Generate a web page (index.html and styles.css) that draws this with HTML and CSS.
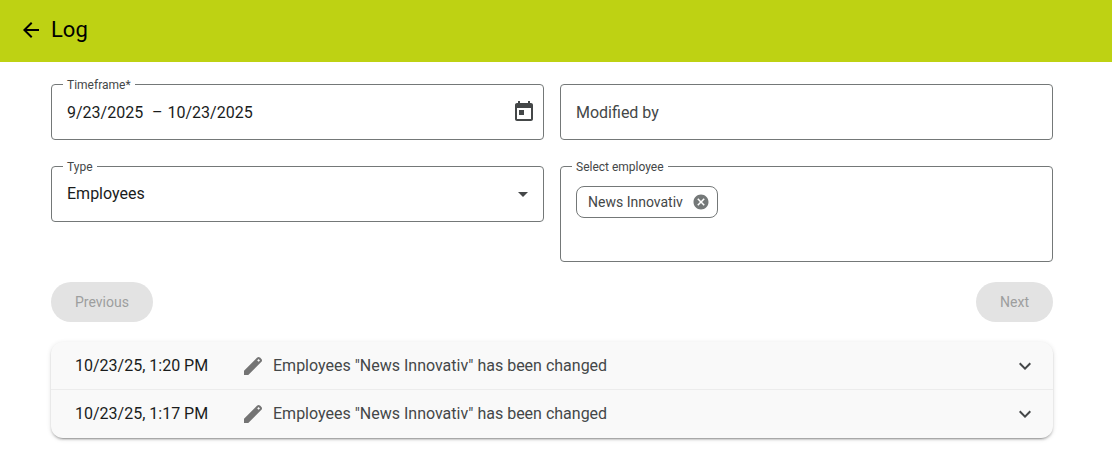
FILE: index.html
```html
<!DOCTYPE html>
<html lang="en">
<head>
  <meta charset="UTF-8">
  <meta name="viewport" content="width=device-width, initial-scale=1.0">
  <title>Log</title>
  <link rel="stylesheet" href="styles.css">
</head>
<body>
  <header class="toolbar">
    <a class="back" href="#" aria-label="Back">
      <svg viewBox="0 0 24 24" width="24" height="24"><path d="M20 11H7.83l5.59-5.59L12 4l-8 8 8 8 1.41-1.41L7.83 13H20v-2z"/></svg>
    </a>
    <h1>Log</h1>
  </header>

  <main>
    <form class="filters">
      <div class="field">
        <label for="startDate">Timeframe*</label>
        <div class="date-range">
          <input type="text" id="startDate" value="9/23/2025">
          <span>–</span>
          <input type="text" id="endDate" value="10/23/2025" aria-label="End date">
        </div>
        <button type="button" class="icon-button" aria-label="Open calendar">
          <svg viewBox="0 0 24 24" width="24" height="24"><path d="M19 3h-1V1h-2v2H8V1H6v2H5c-1.11 0-1.99.9-1.99 2L3 19c0 1.1.89 2 2 2h14c1.1 0 2-.9 2-2V5c0-1.1-.9-2-2-2zm0 16H5V8h14v11zM7 10h5v5H7z"/></svg>
        </button>
      </div>

      <div class="field">
        <input type="text" class="text-input" placeholder="Modified by" aria-label="Modified by">
      </div>

      <div class="field field-select">
        <label for="type">Type</label>
        <select id="type">
          <option>Employees</option>
        </select>
        <svg class="arrow" viewBox="0 0 10 5" width="10" height="5"><path d="M0 0l5 5 5-5z"/></svg>
      </div>

      <div class="field field-chips">
        <label for="employee">Select employee</label>
        <div class="chip">
          <span>News Innovativ</span>
          <button type="button" class="icon-button" aria-label="Remove News Innovativ">
            <svg viewBox="0 0 24 24" width="18" height="18"><path d="M12 2C6.47 2 2 6.47 2 12s4.47 10 10 10 10-4.47 10-10S17.53 2 12 2zm5 13.59L15.59 17 12 13.41 8.41 17 7 15.59 10.59 12 7 8.41 8.41 7 12 10.59 15.59 7 17 8.41 13.41 12 17 15.59z"/></svg>
          </button>
        </div>
        <input type="text" id="employee" class="text-input">
      </div>
    </form>

    <nav class="pager">
      <button type="button" disabled>Previous</button>
      <button type="button" disabled>Next</button>
    </nav>

    <div class="log">
      <button type="button" class="log-entry">
        <span class="time">10/23/25, 1:20 PM</span>
        <svg class="pencil" viewBox="0 0 24 24" width="24" height="24"><path d="M3 21v-4.25L16.2 3.575q.3-.275.663-.425t.762-.15.775.15.65.45L20.425 5q.3.275.437.65T21 6.4q0 .4-.138.763t-.437.662L7.25 21zM17.6 7.8L19 6.4 17.6 5l-1.4 1.4z" fill-rule="evenodd"/></svg>
        <span class="message">Employees "News Innovativ" has been changed</span>
        <svg class="chevron" viewBox="0 0 24 24" width="24" height="24"><path d="M7.41 8.59L12 13.17l4.59-4.58L18 10l-6 6-6-6 1.41-1.41z"/></svg>
      </button>
      <button type="button" class="log-entry">
        <span class="time">10/23/25, 1:17 PM</span>
        <svg class="pencil" viewBox="0 0 24 24" width="24" height="24"><path d="M3 21v-4.25L16.2 3.575q.3-.275.663-.425t.762-.15.775.15.65.45L20.425 5q.3.275.437.65T21 6.4q0 .4-.138.763t-.437.662L7.25 21zM17.6 7.8L19 6.4 17.6 5l-1.4 1.4z" fill-rule="evenodd"/></svg>
        <span class="message">Employees "News Innovativ" has been changed</span>
        <svg class="chevron" viewBox="0 0 24 24" width="24" height="24"><path d="M7.41 8.59L12 13.17l4.59-4.58L18 10l-6 6-6-6 1.41-1.41z"/></svg>
      </button>
    </div>
  </main>
</body>
</html>
```
FILE: styles.css
```css
* {
  box-sizing: border-box;
}

body {
  margin: 0;
  font-family: Roboto, Arial, sans-serif;
  font-size: 16px;
  line-height: 24px;
  color: #1a1c1c;
  background-color: #fff;
}

svg {
  display: block;
  flex: none;
  fill: currentColor;
}

input, select, button {
  font: inherit;
  color: inherit;
  border: none;
  background: none;
  padding: 0;
}

/* Toolbar */
.toolbar {
  display: flex;
  align-items: center;
  gap: 8px;
  padding: 16px 19px 18px;
  background-color: #bed213;
  color: #000;
}

.back {
  color: inherit;
}

h1 {
  margin: 0;
  font-size: 22px;
  line-height: 28px;
  font-weight: 400;
}

main {
  padding: 22px 59px 16px 51px;
}

/* Filters */
.filters {
  display: grid;
  grid-template-columns: 1fr 1fr;
  gap: 26px 16px;
  align-items: start;
}

.field {
  position: relative;
  display: flex;
  align-items: center;
  min-height: 56px;
  padding: 2px 7px 0 15px;
  border: 1px solid #747878;
  border-radius: 4px;
}

/* label sits on the top border */
.field label {
  position: absolute;
  top: -8px;
  left: 11px;
  padding: 0 4px;
  font-size: 12px;
  line-height: 16px;
  color: #444748;
  background-color: #fff;
}

.date-range {
  display: flex;
  flex: 1;
  gap: 5px;
}

.date-range input {
  width: 88px;
}

.date-range input:first-child {
  width: 80px;
}

.text-input {
  width: 100%;
}

.text-input::placeholder {
  color: #444748;
  opacity: 1;
}

.icon-button {
  display: flex;
  color: #444748;
  cursor: pointer;
}

.field > .icon-button {
  padding-bottom: 2px;
}

.field-select {
  padding-top: 0;
}

select {
  width: 100%;
  appearance: none;
}

.arrow {
  position: absolute;
  right: 15px;
  color: #444748;
  pointer-events: none;
}

.field-chips {
  flex-direction: column;
  align-items: flex-start;
  gap: 4px;
  min-height: 96px;
  padding-top: 19px;
}

.chip {
  display: flex;
  align-items: center;
  gap: 9px;
  height: 32px;
  padding: 0 7px 0 11px;
  border: 1px solid #747878;
  border-radius: 8px;
  font-size: 14px;
  line-height: 20px;
  color: #444748;
}

.chip .icon-button {
  color: #747878;
}

/* Paging */
.pager {
  display: flex;
  justify-content: space-between;
  margin: 20px 0;
}

.pager button {
  height: 40px;
  padding: 0 24px;
  border-radius: 20px;
  font-size: 14px;
  background-color: #e3e3e3;
  color: #9d9e9e;
}

/* Log entries */
.log {
  border-radius: 12px;
  background-color: #f9f9f9;
  box-shadow: 0 3px 1px -2px rgba(0, 0, 0, 0.2), 0 2px 2px 0 rgba(0, 0, 0, 0.14), 0 1px 5px 0 rgba(0, 0, 0, 0.12);
}

.log-entry {
  display: flex;
  align-items: center;
  width: 100%;
  height: 48px;
  padding: 0 16px 0 24px;
  text-align: left;
  cursor: pointer;
}

.log-entry:not(:last-child) {
  border-bottom: 1px solid #ececec;
}

.time {
  width: 166px;
}

.pencil {
  color: #747474;
}

.message {
  flex: 1;
  padding-left: 8px;
  color: #444748;
}

.chevron {
  color: #444748;
}
```
